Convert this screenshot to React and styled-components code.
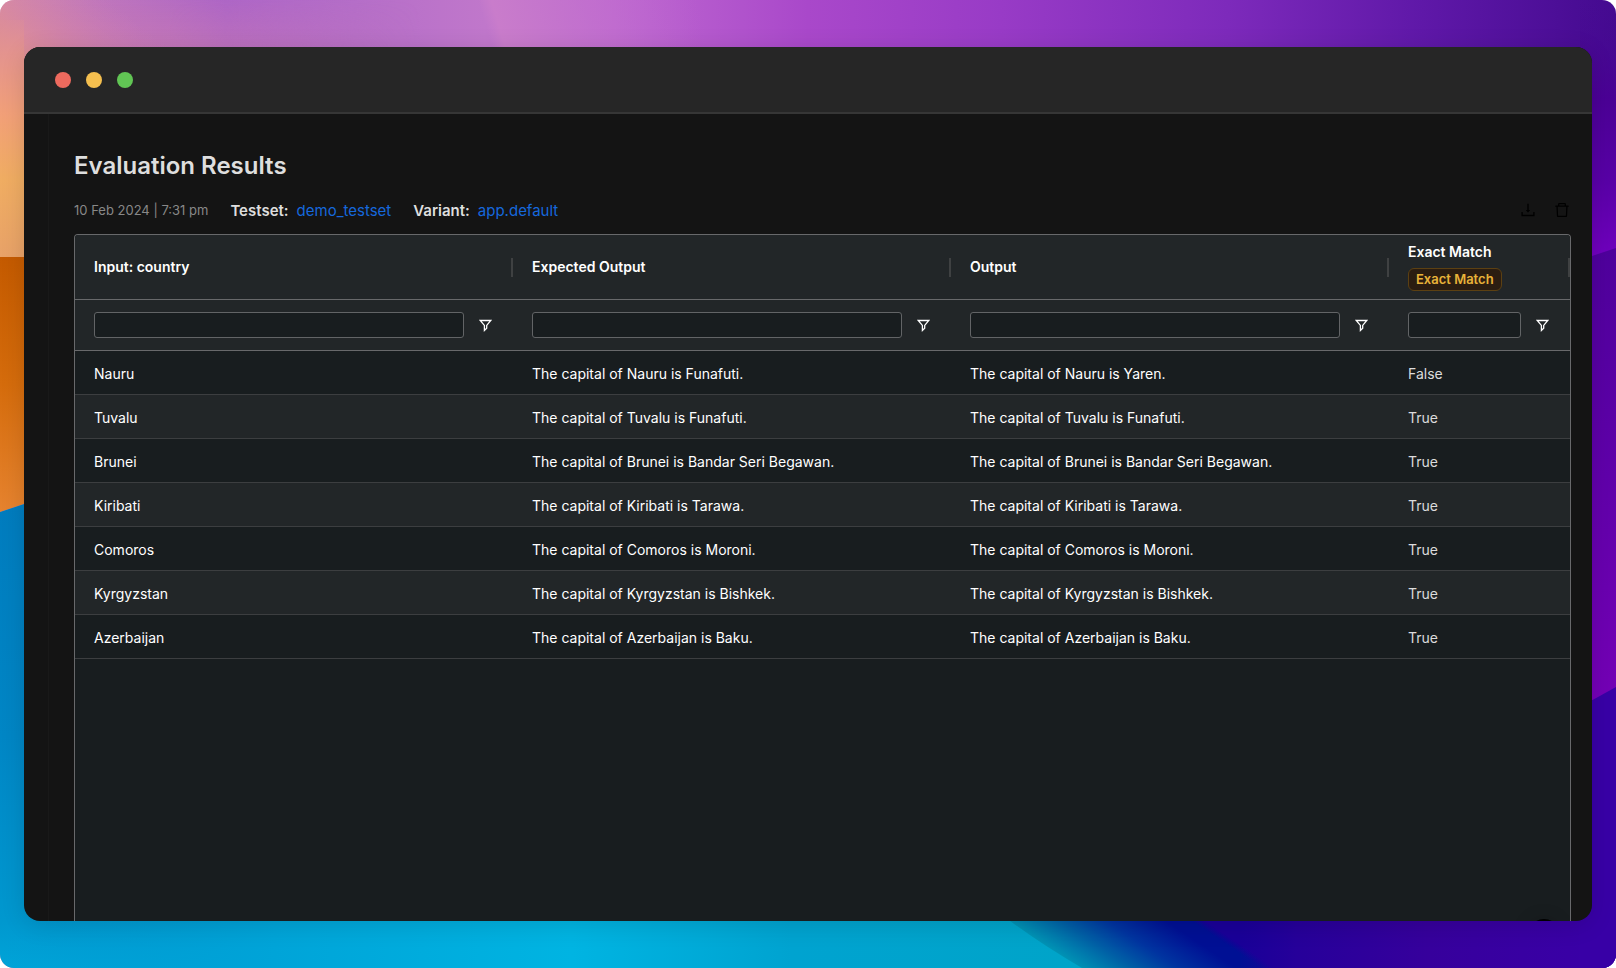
import React from "react";
import styled, { createGlobalStyle } from "styled-components";
import { AiOutlineDelete, AiOutlineDownload } from "react-icons/ai";

const GlobalStyle = createGlobalStyle`
  *, *::before, *::after { box-sizing: border-box; }
  body {
    margin: 0;
    background: #fff;
    font-family: Inter, "Liberation Sans", sans-serif;
  }
`;

const Desktop = styled.main`
  position: relative;
  display: flex;
  flex-direction: column;
  min-height: 100vh;
  padding: 47px 24px;
  border-radius: 14px;
  overflow: hidden;
`;

const WallpaperSvg = styled.svg`
  position: absolute;
  inset: 0;
  width: 100%;
  height: 100%;
`;

const Window = styled.section`
  position: relative;
  flex: 1;
  display: flex;
  flex-direction: column;
  border-radius: 16px;
  overflow: hidden;
  background: #141414;
  box-shadow: 0 4px 24px rgba(0, 0, 0, 0.12);
`;

const TitleBar = styled.header`
  display: flex;
  align-items: center;
  gap: 15px;
  height: 67px;
  padding-left: 31px;
  background: #262626;
  border-bottom: 2px solid #363636;
`;

const Light = styled.span`
  width: 16px;
  height: 16px;
  border-radius: 50%;
  background: ${(p) => p.$color};
`;

const Content = styled.div`
  flex: 1;
  display: flex;
  flex-direction: column;
  margin-left: 24px;
  padding: 36px 21px 0 25px;
  border-left: 1px solid #191919;
`;

const Title = styled.h1`
  margin: 0;
  color: #dedede;
  font-size: 24px;
  line-height: 32px;
  font-weight: 600;
`;

const MetaRow = styled.div`
  display: flex;
  align-items: center;
  justify-content: space-between;
  margin-top: 14px;
  height: 28px;
`;

const MetaGroup = styled.div`
  display: flex;
  align-items: center;
  gap: 22px;
`;

const DateText = styled.time`
  color: #888;
  font-size: 13px;
`;

const MetaItem = styled.span`
  display: flex;
  gap: 8px;
  color: #dedede;
  font-size: 15px;
`;

const MetaLabel = styled.span`
  font-weight: 600;
`;

const MetaLink = styled.a`
  color: #1668dc;
  text-decoration: none;
`;

const IconButton = styled.button`
  display: flex;
  padding: 0;
  border: 0;
  background: none;
  color: ${(p) => p.$color};
  font-size: 18px;
  cursor: pointer;
`;

const ActionGroup = styled.div`
  display: flex;
  gap: 16px;
`;

const GridFrame = styled.div`
  flex: 1;
  margin-top: 10px;
  border: 1px solid #68696b;
  border-bottom: 0;
  border-radius: 4px 4px 0 0;
  overflow: hidden;
  background: #181d1f;
`;

const Grid = styled.table`
  width: 100%;
  table-layout: fixed;
  border-collapse: separate;
  border-spacing: 0;
`;

const ScoreCol = styled.col`
  width: 181px;
`;

const HeadCell = styled.th`
  height: 65px;
  padding: 0 0 0 19px;
  border-bottom: 1px solid #68696b;
  background: #222628;
  color: #fff;
  font-size: 14px;
  line-height: 18px;
  font-weight: 600;
  text-align: left;
`;

const HeadInner = styled.div`
  display: flex;
  align-items: center;
  justify-content: space-between;
`;

const HeadLabel = styled.div`
  display: flex;
  flex-direction: column;
  align-items: flex-start;
  gap: 7px;
`;

const ResizeHandle = styled.span`
  width: 2px;
  height: 19px;
  background: #3f4142;
`;

const Tag = styled.span`
  padding: 0 7px;
  border: 1px solid #5c4012;
  border-radius: 6px;
  background: #2b1d11;
  color: #e8b339;
  font-size: 13px;
  line-height: 21px;
`;

const FilterCell = styled.td`
  height: 51px;
  padding: 0 21px 0 19px;
  border-bottom: 1px solid #68696b;
  background: #222628;
`;

const FilterInner = styled.div`
  display: flex;
  align-items: center;
  gap: 15px;
`;

const FilterInput = styled.input`
  flex: 1;
  min-width: 0;
  height: 26px;
  padding: 0 6px;
  border: 1px solid #626466;
  border-radius: 3px;
  background: #181d1f;
  color: #fff;
  font: inherit;
  font-size: 14px;
`;

const BodyRow = styled.tr`
  background: ${(p) => (p.$odd ? "#222628" : "#181d1f")};
`;

const Cell = styled.td`
  height: 44px;
  padding: 2px 19px 0;
  border-bottom: 1px solid #3c3e40;
  color: ${(p) => (p.$muted ? "#dcdcdc" : "#fff")};
  font-size: 14px;
  line-height: 20px;
  white-space: nowrap;
`;

const HelpButton = styled.button`
  position: absolute;
  right: 32px;
  bottom: -30px;
  width: 32px;
  height: 32px;
  padding: 0;
  border: 0;
  border-radius: 50%;
  background: #000;
  box-shadow: 0 0 18px rgba(0, 0, 0, 0.15);
`;

const columns = ["Input: country", "Expected Output", "Output", "Exact Match"];

const results = [
  ["Nauru", "Funafuti", "Yaren", "False"],
  ["Tuvalu", "Funafuti", "Funafuti", "True"],
  ["Brunei", "Bandar Seri Begawan", "Bandar Seri Begawan", "True"],
  ["Kiribati", "Tarawa", "Tarawa", "True"],
  ["Comoros", "Moroni", "Moroni", "True"],
  ["Kyrgyzstan", "Bishkek", "Bishkek", "True"],
  ["Azerbaijan", "Baku", "Baku", "True"],
];

function Gradient({ id, stops, ...rest }) {
  return (
    <linearGradient id={id} gradientUnits="userSpaceOnUse" {...rest}>
      {stops.map(([offset, color, opacity = 1]) => (
        <stop key={offset} offset={offset} stopColor={color} stopOpacity={opacity} />
      ))}
    </linearGradient>
  );
}

function Wallpaper() {
  return (
    <WallpaperSvg viewBox="0 0 1616 968" preserveAspectRatio="none" aria-hidden="true">
      <defs>
        <Gradient id="sky" x1="0" y1="0" x2="1616" y2="0" stops={[
          [0, "#cf86b0"], [0.06, "#c077bc"], [0.14, "#ae66c6"], [0.22, "#b56ec8"], [0.3, "#c077cb"],
          [0.38, "#be68d0"], [0.5, "#a948ca"], [0.62, "#983bc6"], [0.76, "#7d2abb"], [0.88, "#5f18a8"], [1, "#440a90"],
        ]} />
        <Gradient id="skyRay" x1="478" y1="0" x2="680" y2="-60" stops={[[0, "#c87dcb", 0], [0.06, "#c97ccb"], [1, "#be68d0", 0]]} />
        <Gradient id="horizon" x1="0" y1="0" x2="0" y2="50" stops={[[0, "#c878b0", 0], [1, "#c87ab4", 0.7]]} />
        <Gradient id="horizonFade" x1="0" y1="0" x2="420" y2="0" stops={[[0, "#fff"], [0.4, "#fff"], [1, "#000"]]} />
        <mask id="horizonMask">
          <rect width="420" height="60" fill="url(#horizonFade)" />
        </mask>
        <Gradient id="peach" x1="0" y1="0" x2="0" y2="256" stops={[
          [0, "#d88aa0", 0], [0.2, "#e3938f"], [0.45, "#f2a078"], [0.7, "#f0ad62"], [1, "#e8a268"],
        ]} />
        <Gradient id="peachFade" x1="0" y1="60" x2="70" y2="-30" stops={[[0, "#e59589"], [1, "#d080b0", 0]]} />
        <Gradient id="orange" x1="0" y1="256" x2="0" y2="512" stops={[[0, "#c45a00"], [0.5, "#d56c0c"], [1, "#e6832f"]]} />
        <Gradient id="sea" x1="0" y1="505" x2="0" y2="968" stops={[[0, "#007cbe"], [0.5, "#0086c5"], [0.9, "#0098cf"], [1, "#00a4d8"]]} />
        <Gradient id="seaGlow" x1="0" y1="0" x2="1100" y2="0" stops={[
          [0, "#0098d0", 0], [0.25, "#00a4d8"], [0.52, "#00b4e2"], [0.72, "#00a3d0"], [1, "#00a4c8"],
        ]} />
        <Gradient id="deep" x1="1010" y1="921" x2="1070" y2="831" stops={[
          [0, "#0092b4"], [0.25, "#0062a6"], [0.5, "#0034a0"], [0.8, "#001094"], [0.93, "#001094"], [1, "#1a0098"],
        ]} />
        <Gradient id="indigo" x1="1240" y1="0" x2="1616" y2="0" stops={[[0, "#22009a", 0], [0.15, "#26009a"], [0.5, "#36009c"], [1, "#3a00a8"]]} />
        <Gradient id="violetTop" x1="0" y1="0" x2="0" y2="256" stops={[[0, "#440a90", 0], [0.4, "#4b0096"], [0.7, "#5800a6"], [1, "#7000be"]]} />
        <Gradient id="violet" x1="0" y1="250" x2="0" y2="700" stops={[[0, "#4e009c"], [0.5, "#6000aa"], [1, "#7400b6"]]} />
      </defs>
      <rect width="1616" height="968" fill="url(#sky)" />
      <path d="M474 0 H700 V60 H490 Z" fill="url(#skyRay)" />
      <rect width="420" height="60" fill="url(#horizon)" mask="url(#horizonMask)" />
      <rect width="200" height="60" fill="url(#peachFade)" />
      <rect y="20" width="24" height="240" fill="url(#peach)" />
      <path d="M0 257 H60 V500 L24 504 L0 512 Z" fill="url(#orange)" />
      <path d="M0 512 L24 504 H1100 V968 H0 Z" fill="url(#sea)" />
      <path d="M0 912 H1100 V968 H0 Z" fill="url(#seaGlow)" />
      <rect x="1580" width="36" height="260" fill="url(#violetTop)" />
      <path d="M1580 260 L1616 248 V700 H1580 Z" fill="url(#violet)" />
      <path d="M1000 914 L1010 921 Q1044 946 1082 968 H1616 V900 H1000 Z" fill="url(#deep)" />
      <rect x="1240" y="900" width="376" height="68" fill="url(#indigo)" />
      <path d="M1580 707 L1616 687 V968 H1580 Z" fill="#3800a6" />
    </WallpaperSvg>
  );
}

function FilterIcon() {
  return (
    <svg width="13" height="13" viewBox="0 0 13 13" fill="none" stroke="#fff" strokeWidth="1.3" aria-hidden="true">
      <path d="M1.2 1.5 H11.8 L7.7 6.4 V9.2 L5.4 11.4 V6.4 Z" />
    </svg>
  );
}

export default function App() {
  return (
    <>
      <GlobalStyle />
      <Desktop>
        <Wallpaper />
        <Window>
          <TitleBar>
            <Light $color="#ed6a5e" />
            <Light $color="#f5bf4f" />
            <Light $color="#61c554" />
          </TitleBar>
          <Content>
            <Title>Evaluation Results</Title>
            <MetaRow>
              <MetaGroup>
                <DateText dateTime="2024-02-10T19:31">10 Feb 2024 | 7:31 pm</DateText>
                <MetaItem>
                  <MetaLabel>Testset:</MetaLabel>
                  <MetaLink href="#testset">demo_testset</MetaLink>
                </MetaItem>
                <MetaItem>
                  <MetaLabel>Variant:</MetaLabel>
                  <MetaLink href="#variant">app.default</MetaLink>
                </MetaItem>
              </MetaGroup>
              <ActionGroup>
                <IconButton $color="#000" aria-label="Download results"><AiOutlineDownload /></IconButton>
                <IconButton $color="#000" aria-label="Delete evaluation"><AiOutlineDelete /></IconButton>
              </ActionGroup>
            </MetaRow>
            <GridFrame>
              <Grid>
                <colgroup>
                  <col />
                  <col />
                  <col />
                  <ScoreCol />
                </colgroup>
                <thead>
                  <tr>
                    {columns.map((name, i) => (
                      <HeadCell key={name} scope="col">
                        <HeadInner>
                          <HeadLabel>
                            {name}
                            {i === 3 && <Tag>Exact Match</Tag>}
                          </HeadLabel>
                          <ResizeHandle />
                        </HeadInner>
                      </HeadCell>
                    ))}
                  </tr>
                  <tr>
                    {columns.map((name) => (
                      <FilterCell key={name}>
                        <FilterInner>
                          <FilterInput type="text" aria-label={`${name} filter`} />
                          <IconButton $color="#fff" aria-label={`Open ${name} filter menu`}><FilterIcon /></IconButton>
                        </FilterInner>
                      </FilterCell>
                    ))}
                  </tr>
                </thead>
                <tbody>
                  {results.map(([country, expected, output, match], i) => (
                    <BodyRow key={country} $odd={i % 2 === 1}>
                      <Cell>{country}</Cell>
                      <Cell>{`The capital of ${country} is ${expected}.`}</Cell>
                      <Cell>{`The capital of ${country} is ${output}.`}</Cell>
                      <Cell $muted>{match}</Cell>
                    </BodyRow>
                  ))}
                </tbody>
              </Grid>
            </GridFrame>
          </Content>
          <HelpButton aria-label="Help" />
        </Window>
      </Desktop>
    </>
  );
}
